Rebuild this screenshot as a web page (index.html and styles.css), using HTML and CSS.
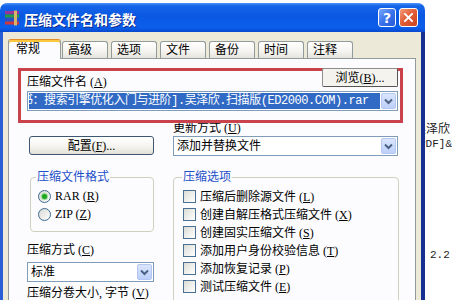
FILE: index.html
```html
<!DOCTYPE html>
<html lang="zh-CN">
<head>
  <meta charset="UTF-8">
  <title>压缩文件名和参数</title>
  <link rel="stylesheet" href="styles.css">
</head>
<body>
  <div class="screen">
    <div class="window">
      <div class="titlebar">
        <svg class="app-icon" viewBox="0 0 16 16" width="16" height="16">
          <rect x="1" y="1" width="14" height="3" fill="#9a3497"/>
          <rect x="1" y="4.5" width="14" height="3" fill="#2f9a3c"/>
          <rect x="1" y="8" width="14" height="3" fill="#2a52c6"/>
          <rect x="1" y="11.5" width="14" height="3" fill="#d0383a"/>
          <rect x="10" y="0.5" width="3" height="15" fill="#d8b36a"/>
        </svg>
        <span class="title">压缩文件名和参数</span>
        <div class="title-buttons">
          <div class="tb-btn help">?</div>
          <div class="tb-btn close">
            <svg viewBox="0 0 19 19" width="19" height="19"><path d="M5.5 5.5l8 8M13.5 5.5l-8 8" stroke="#fff" stroke-width="2.2" stroke-linecap="round"/></svg>
          </div>
        </div>
      </div>

      <div class="frame">
        <div class="tabs">
          <div class="tab active">常规</div>
          <div class="tab">高级</div>
          <div class="tab">选项</div>
          <div class="tab">文件</div>
          <div class="tab">备份</div>
          <div class="tab">时间</div>
          <div class="tab">注释</div>
        </div>

        <div class="panel">
          <div class="name-box">
            <div class="name-row">
              <span class="name-label">压缩文件名 (<u>A</u>)</span>
              <div class="btn browse"><span>浏览(<u>B</u>)...</span></div>
            </div>
            <div class="combo">
              <div class="combo-value selected"><span class="file-name">书：搜索引擎优化入门与进阶].吴泽欣.扫描版(ED2000.COM).rar</span></div>
              <span class="drop">
                <svg viewBox="0 0 15 16" width="15" height="16"><path d="M4 6.5l3.5 3.5 3.5-3.5" fill="none" stroke="#4d6185" stroke-width="2"/></svg>
              </span>
            </div>
          </div>

          <div class="lower">
            <div class="col-left">
              <div class="btn config"><span>配置(<u>F</u>)...</span></div>

              <fieldset class="group group-format">
                <legend>压缩文件格式</legend>
                <div class="opt"><span class="radio checked"></span><span>RAR (<u>R</u>)</span></div>
                <div class="opt"><span class="radio"></span><span>ZIP (<u>Z</u>)</span></div>
              </fieldset>

              <div class="field-label method">压缩方式 (<u>C</u>)</div>
              <div class="combo short">
                <div class="combo-value">标准</div>
                <span class="drop">
                  <svg viewBox="0 0 15 16" width="15" height="16"><path d="M4 6.5l3.5 3.5 3.5-3.5" fill="none" stroke="#4d6185" stroke-width="2"/></svg>
                </span>
              </div>
              <div class="field-label volume">压缩分卷大小, 字节 (<u>V</u>)</div>
            </div>

            <div class="col-right">
              <div class="field-label update">更新方式 (<u>U</u>)</div>
              <div class="combo">
                <div class="combo-value">添加并替换文件</div>
                <span class="drop">
                  <svg viewBox="0 0 15 16" width="15" height="16"><path d="M4 6.5l3.5 3.5 3.5-3.5" fill="none" stroke="#4d6185" stroke-width="2"/></svg>
                </span>
              </div>

              <fieldset class="group group-options">
                <legend>压缩选项</legend>
                <div class="opt"><span class="check"></span><span>压缩后删除源文件 (<u>L</u>)</span></div>
                <div class="opt"><span class="check"></span><span>创建自解压格式压缩文件 (<u>X</u>)</span></div>
                <div class="opt"><span class="check"></span><span>创建固实压缩文件 (<u>S</u>)</span></div>
                <div class="opt"><span class="check"></span><span>添加用户身份校验信息 (<u>T</u>)</span></div>
                <div class="opt"><span class="check"></span><span>添加恢复记录 (<u>P</u>)</span></div>
                <div class="opt"><span class="check"></span><span>测试压缩文件 (<u>E</u>)</span></div>
              </fieldset>
            </div>
          </div>
        </div>
      </div>
    </div>

    <div class="backdrop">
      <div class="bg-line name">吴泽欣</div>
      <div class="bg-line code">PDF]&amp;am</div>
      <div class="bg-line num">2.2.</div>
    </div>
  </div>
</body>
</html>
```

FILE: styles.css
```css
* {
  box-sizing: border-box;
}

body {
  margin: 0;
  background: #fff;
  font-family: "Liberation Serif", "Noto Sans CJK SC", serif;
  font-size: 12px;
  color: #000;
}

.screen {
  display: flex;
  align-items: flex-start;
  width: 452px;
  height: 300px;
  overflow: hidden;
}

/* Window chrome */
.window {
  flex: none;
  width: 425px;
  margin-top: 3px;
}

.titlebar {
  height: 29px;
  display: flex;
  align-items: center;
  gap: 4px;
  padding: 0 7px 0 4px;
  border-radius: 7px 7px 0 0;
  background: linear-gradient(#4a94fa 0%, #1565e8 10%, #0a58e2 45%, #0b5eec 85%, #0848cc 100%);
}

.app-icon {
  flex: none;
}

.title {
  color: #fff;
  font-family: "Noto Sans CJK SC", sans-serif;
  font-size: 14px;
  font-weight: 700;
  line-height: 16px;
  text-shadow: 1px 1px 0 #0c2a8a;
  margin-top: 2px;
}

.title-buttons {
  margin-left: auto;
  display: flex;
  gap: 3px;
}

.tb-btn {
  width: 19px;
  height: 19px;
  border: 1px solid #fff;
  border-radius: 3px;
  display: flex;
  align-items: center;
  justify-content: center;
}

.tb-btn.help {
  width: 18px;
  background: linear-gradient(135deg, #7aa8fb 0%, #3a73ea 50%, #2559d8 100%);
  color: #fff;
  font-family: "DejaVu Sans", sans-serif;
  font-weight: 700;
  font-size: 14px;
}

.tb-btn.close {
  background: linear-gradient(135deg, #f29a78 0%, #e3603a 45%, #c9421e 100%);
}

.tb-btn.close svg {
  display: block;
}

.frame {
  height: 268px;
  display: flex;
  flex-direction: column;
  padding: 7px 5px 0;
  background: #ece9d8;
  border-left: 3px solid #2a5ed6;
  border-right: 4px solid #182f92;
}

/* Tabs */
.tabs {
  display: flex;
  align-items: flex-end;
  gap: 3px;
  height: 20px;
  margin-bottom: -1px;
  position: relative;
  z-index: 1;
}

.tab {
  width: 46px;
  height: 17px;
  margin-bottom: 1px;
  padding: 1px 0 0 5px;
  line-height: 14px;
  border: 1px solid #919b9c;
  border-bottom: none;
  border-radius: 3px 3px 0 0;
  background: linear-gradient(#fff, #f4f3ef 60%, #e4e3dc);
}

.tab.active {
  width: 53px;
  height: 20px;
  margin-right: -2px;
  margin-bottom: 0;
  padding: 2px 0 0 7px;
  border-top: 1px solid #e68b2c;
  box-shadow: inset 0 2px 0 #ffc73c;
  background: #fcfcfe;
}

.panel {
  flex: 1;
  overflow: hidden;
  padding: 9px 12px 0 9px;
  background: #fcfcfe;
  border: 1px solid #919b9c;
  border-bottom: none;
}

/* File name block (marked in red) */
.name-box {
  position: relative;
  z-index: 2;
  padding: 0 2px 9px 6px;
  border: 3px solid #c8434b;
}

.name-row {
  display: flex;
  align-items: flex-start;
  justify-content: space-between;
}

.name-label {
  margin-top: 4px;
  line-height: 14px;
}

.btn {
  height: 19px;
  display: flex;
  align-items: center;
  justify-content: center;
  line-height: 14px;
  border: 1px solid #3e5772;
  border-radius: 3px;
  background: linear-gradient(#fff, #f5f4ef 55%, #e2e0d6);
}

.btn.browse {
  width: 76px;
  margin-top: -3px;
  background: #f4f3ee;
  border-color: #8d8d8d #555 #555 #8d8d8d;
  border-radius: 2px;
}

.combo {
  height: 20px;
  display: flex;
  align-items: center;
  gap: 1px;
  padding: 1px;
  margin-top: 2px;
  background: #fff;
  border: 1px solid #7f9db9;
}

.combo-value {
  flex: 1;
  min-width: 0;
  height: 16px;
  padding-left: 2px;
  line-height: 16px;
  white-space: nowrap;
  overflow: hidden;
}

.combo-value.selected {
  padding-left: 0;
  background: #316ac5;
  color: #fff;
}

.file-name {
  display: block;
  margin-left: -8px;
  font-family: "Liberation Mono", "Noto Sans CJK SC", monospace;
  letter-spacing: -0.45px;
}

.drop {
  flex: none;
  width: 15px;
  height: 16px;
  border: 1px solid #b3c7f2;
  border-radius: 2px;
  background: linear-gradient(#dbe6fd, #bccffa);
}

.drop svg {
  display: block;
  margin: -1px;
}

/* Lower two columns */
.lower {
  display: flex;
  gap: 19px;
  margin-left: 9px;
}

.col-left {
  width: 127px;
  padding-top: 13px;
}

.col-right {
  width: 226px;
}

.btn.config {
  width: 125px;
  margin-left: 2px;
}

.field-label {
  line-height: 14px;
  white-space: nowrap;
}

.field-label.update {
  margin-top: -2px;
}

.field-label.method {
  margin-top: 11px;
}

.field-label.volume {
  margin-top: 4px;
}

.col-right .combo {
  width: 225px;
  margin-top: 1px;
}

.combo.short {
  margin-top: 5px;
}

.group {
  margin: 0;
  padding: 3px 6px 8px;
  border: 1px solid #d0d0bf;
  border-radius: 4px;
}

.group legend {
  margin-left: -1px;
  padding: 0 1px;
  line-height: 14px;
  color: #1c4fc9;
}

.group-format {
  width: 124px;
  margin: 15px 0 0 3px;
}

.group-options {
  width: 226px;
  margin-top: 14px;
  padding-left: 9px;
}

.opt {
  height: 18px;
  display: flex;
  align-items: center;
  gap: 4px;
  white-space: nowrap;
}

.radio {
  width: 13px;
  height: 13px;
  margin-left: 1px;
  border: 1px solid #3b6a94;
  border-radius: 50%;
  background: linear-gradient(135deg, #d8d8d2, #fff);
  display: flex;
  align-items: center;
  justify-content: center;
}

.radio.checked::after {
  content: "";
  width: 5px;
  height: 5px;
  border-radius: 50%;
  background: #1fa61f;
  box-shadow: 0 0 1px 1px #8fd68f;
}

.check {
  flex: none;
  width: 13px;
  height: 13px;
  border: 1px solid #4a6f93;
  background: linear-gradient(135deg, #dcdcd6, #fff);
}

/* Page visible behind the dialog */
.backdrop {
  flex: 1;
  height: 300px;
  overflow: hidden;
  padding-top: 121px;
  color: #222;
}

.bg-line {
  white-space: nowrap;
  line-height: 14px;
}

.bg-line.name {
  margin-left: -11px;
  font-family: "Noto Sans CJK SC", sans-serif;
}

.bg-line.code {
  margin-top: 2px;
  margin-left: -6px;
  font-family: "Liberation Mono", monospace;
  font-size: 11px;
}

.bg-line.num {
  margin-top: 97px;
  padding-left: 5px;
  font-family: "Liberation Mono", monospace;
  font-size: 11px;
}
```
